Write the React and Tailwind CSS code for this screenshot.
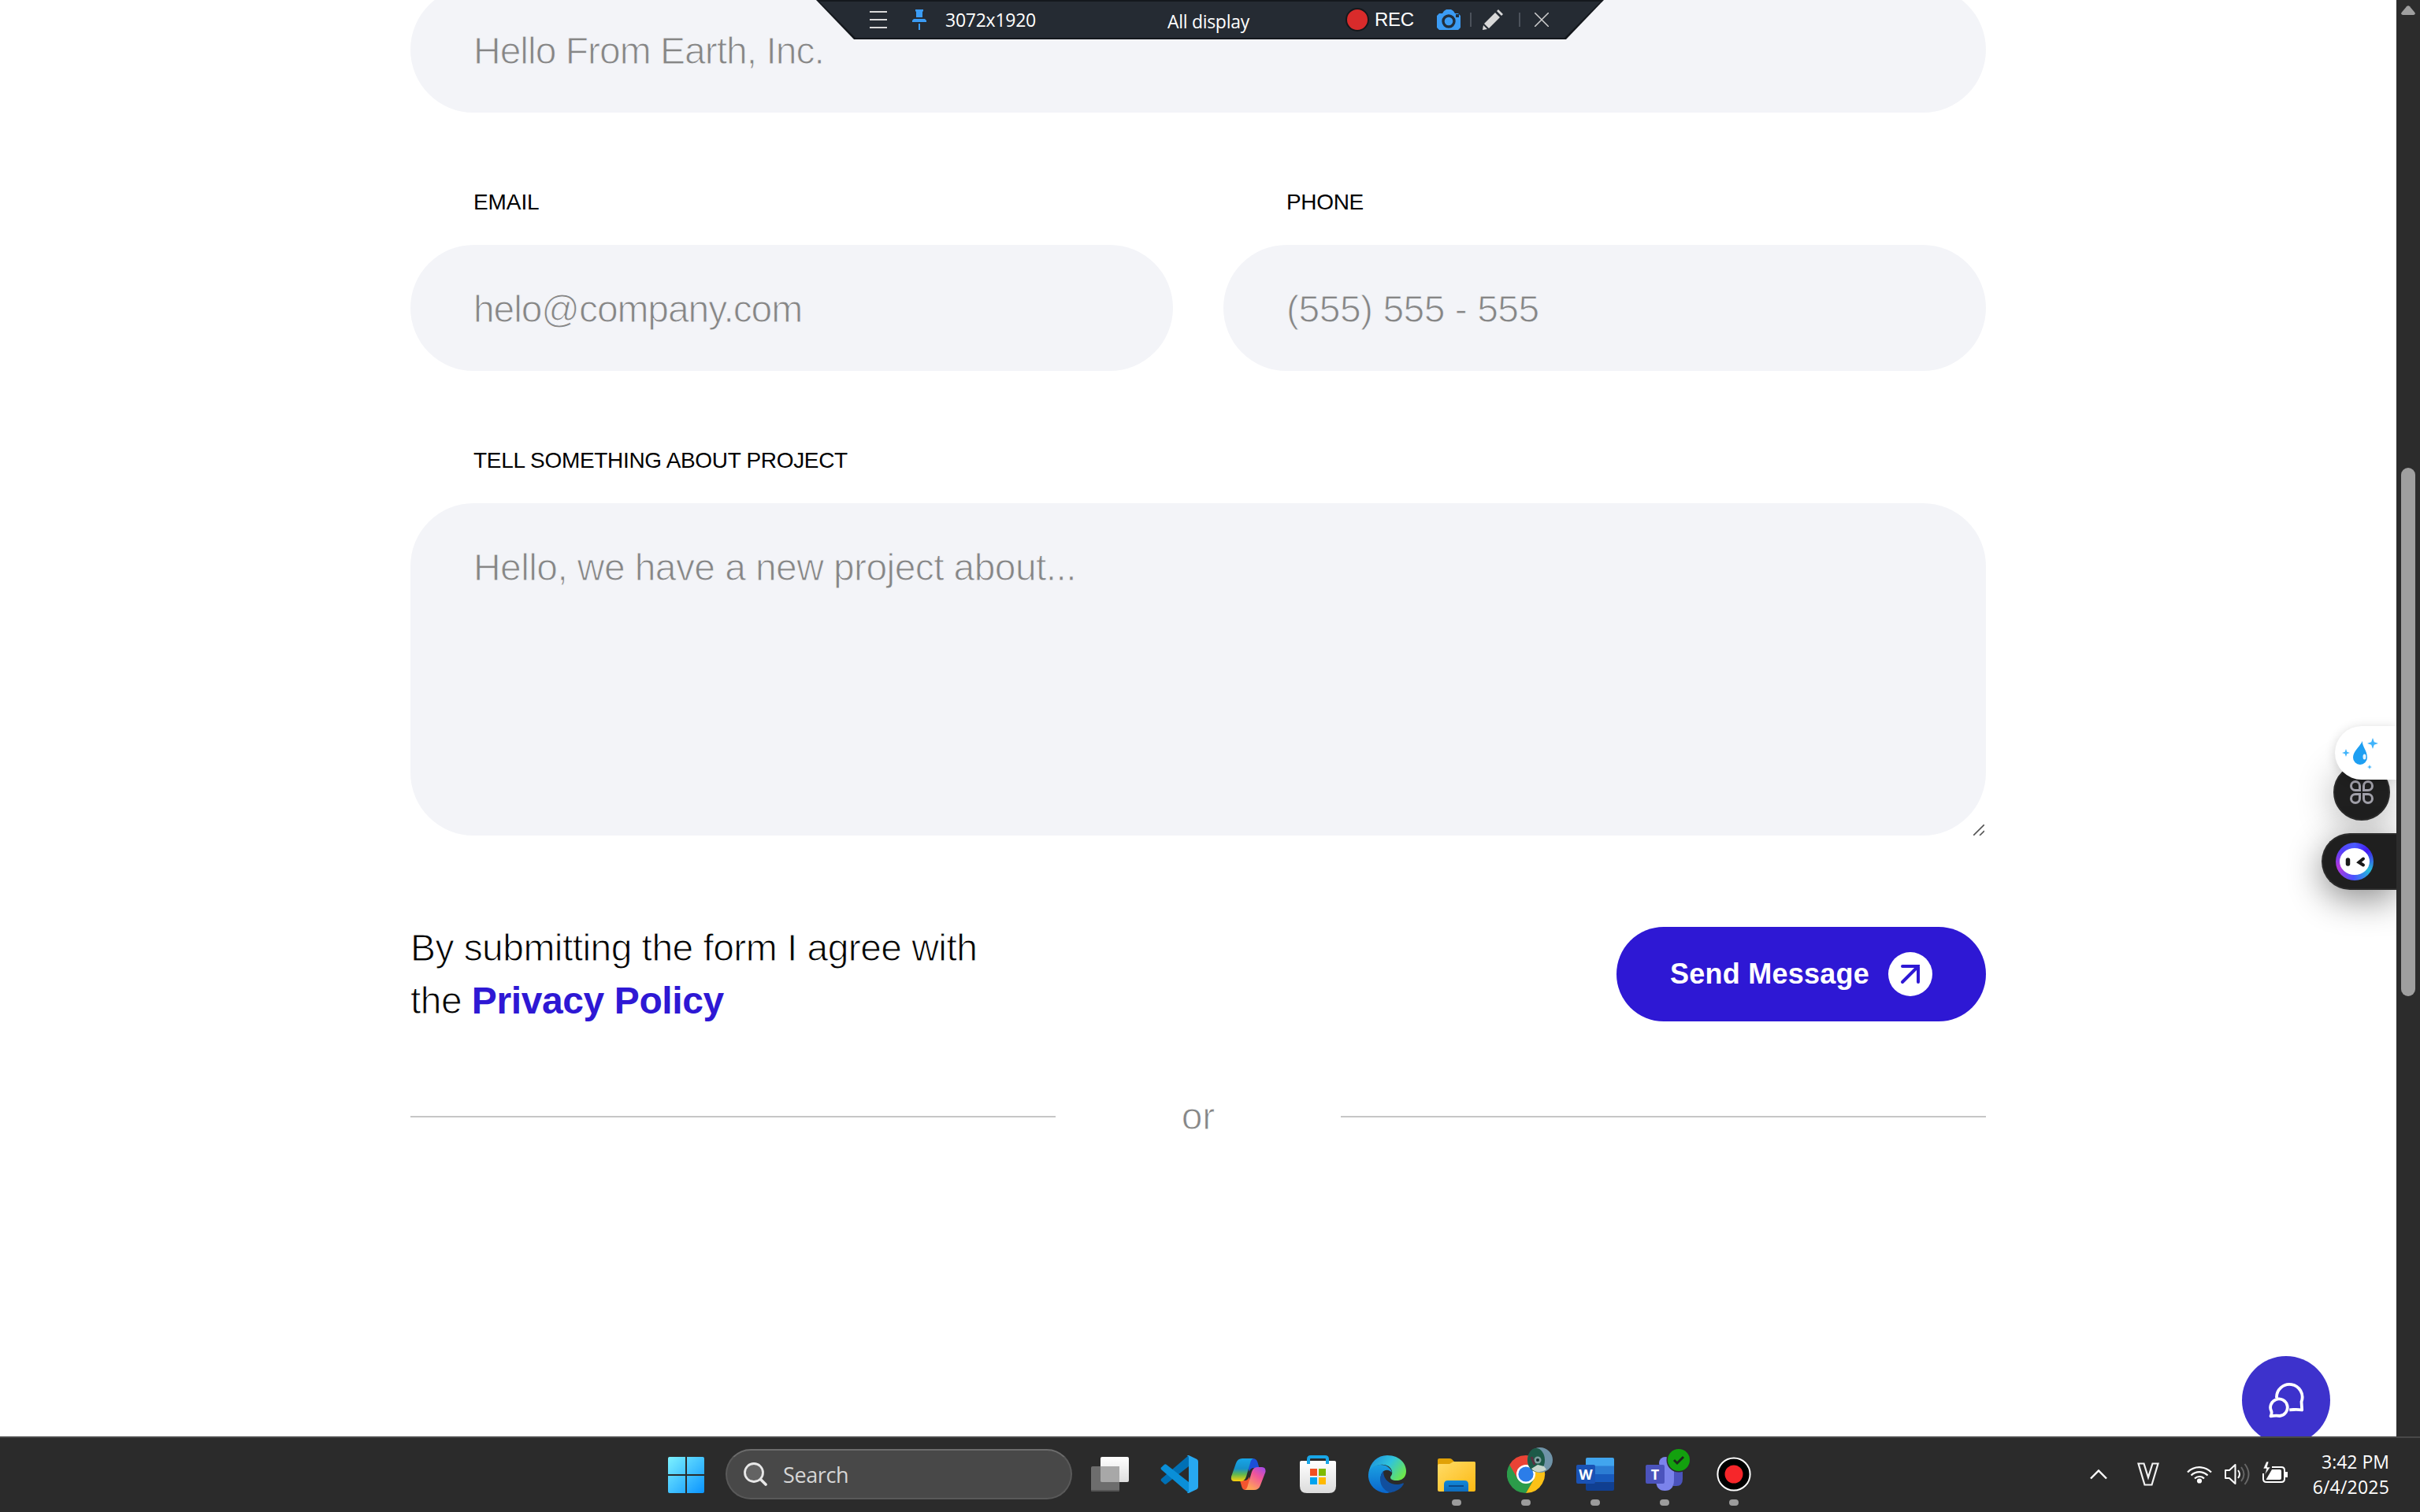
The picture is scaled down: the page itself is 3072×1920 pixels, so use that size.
const light = "font-['Liberation_Sans',Arial,sans-serif] text-[48px] whitespace-pre";
const fieldText = "text-[#868686] [-webkit-text-stroke:1px_#f3f4f8] leading-[68px]";
const label = "pl-20 font-['Liberation_Sans',Arial,sans-serif] text-[28px] leading-[34px] text-black whitespace-pre";

function CaptureBar() {
  return (
    <div className="absolute top-0 left-[1036px] z-20 h-[50px] w-[1000px] bg-[#14181d] [clip-path:polygon(0_0,100%_0,952px_100%,48px_100%)]">
      <div className="mx-auto h-12 w-[1000px] bg-[#252b33] pt-0.5 [clip-path:polygon(4px_2px,996px_2px,950px_100%,50px_100%)]">
        <div className="flex h-[46px] items-center pl-[68px] font-['Open_Sans',sans-serif] text-[23px] text-white">
          <svg className="h-[26px] w-[22px] shrink-0" viewBox="0 0 22 26" stroke="#d9d9d9" strokeWidth="2">
            <path d="M0 3h22M0 13h22M0 23h22" />
          </svg>
          <svg className="ml-8 h-[26px] w-[18px] shrink-0" viewBox="0 0 18 26" fill="#3b9cf5">
            <path d="M4 0h10v2l-1 1v7H5V3L4 2zM2 12h14l2 2v2H0v-2zM8 18h2v8H8z" />
          </svg>
          <span className="ml-[24px] w-[282px] leading-[46px] tracking-[-0.25px]">3072x1920</span>
          <span className="w-[226px] pt-1 leading-[42px] tracking-[-0.3px]">All display</span>
          <span className="size-[30px] shrink-0 rounded-full border-2 border-[#15181c] bg-[#d92b2b]" />
          <span className="ml-[7px] w-[50px] font-['Liberation_Sans',sans-serif] text-[24px] leading-[46px] tracking-[-0.3px]">REC</span>
          <svg className="ml-[29px] h-[26px] w-[30px] shrink-0" viewBox="0 0 30 26">
            <path fill="#3b9cf5" d="M9 2l3-2h6l3 2 2 3h4l3 3v15l-3 3H3l-3-3V8l3-3h4z" />
            <circle cx="15" cy="15" r="7" fill="none" stroke="#222f3d" strokeWidth="3.4" />
            <path d="M24 8h4" stroke="#222f3d" strokeWidth="4" />
          </svg>
          <span className="ml-[12px] h-[18px] w-0.5 bg-[#4c525b]" />
          <svg className="ml-[14px] size-[26px] shrink-0" viewBox="0 0 26 26" fill="#d9d9d9">
            <path d="M16 4l6 6L8 24l-6-6zM18 2l2-2 6 6-2 2zM1 20l5 5-6 1z" />
          </svg>
          <span className="ml-[20px] h-[18px] w-0.5 bg-[#4c525b]" />
          <svg className="ml-[18px] size-[18px] shrink-0" viewBox="0 0 18 18" stroke="#d0d0d0" strokeWidth="1.5">
            <path d="M0 0l18 18M18 0L0 18" />
          </svg>
        </div>
      </div>
    </div>
  );
}

function ContactForm() {
  return (
    <main className="mx-auto flex w-[2000px] flex-col">
      <div className="-mt-[17px] h-40 rounded-[80px] bg-[#f3f4f8] px-20 pt-[48px]">
        <div className={`${light} ${fieldText} tracking-[-1px]`}>Hello From Earth, Inc.</div>
      </div>
      <div className="mt-[97px] grid grid-cols-2 gap-x-16">
        <div>
          <div className={`${label} tracking-[-0.1px]`}>EMAIL</div>
          <div className="mt-[37px] h-40 rounded-[80px] bg-[#f3f4f8] px-20 pt-[48px]">
            <div className={`${light} ${fieldText} tracking-[-1.1px]`}>helo@company.com</div>
          </div>
        </div>
        <div>
          <div className={`${label} tracking-[-0.35px]`}>PHONE</div>
          <div className="mt-[37px] h-40 rounded-[80px] bg-[#f3f4f8] px-20 pt-[48px]">
            <div className={`${light} ${fieldText} tracking-[-0.5px]`}>(555) 555 - 555</div>
          </div>
        </div>
      </div>
      <div className={`${label} mt-[97px] tracking-[-0.32px]`}>TELL SOMETHING ABOUT PROJECT</div>
      <div className="relative mt-[37px] h-[422px] rounded-[80px] bg-[#f3f4f8] px-20 pt-[48px]">
        <div className={`${light} ${fieldText} tracking-[-0.6px]`}>Hello, we have a new project about...</div>
        <svg className="absolute right-0.5 bottom-0 size-[14px]" viewBox="0 0 14 14" stroke="#555" strokeWidth="1.6">
          <path d="M0 14L14 0M8 14L14 8" />
        </svg>
      </div>
      <div className="mt-[109px] flex h-[134px] items-start justify-between">
        <div className={`${light} leading-[67px] tracking-[-0.56px] text-black [-webkit-text-stroke:1px_#fff]`}>
          By submitting the form I agree with{"\n"}the{" "}
          <span className="font-bold tracking-[-0.4px] text-[#2e18d4] [-webkit-text-stroke:0px]">Privacy Policy</span>
        </div>
        <div className="mt-[7px] flex h-[120px] w-[469px] items-center justify-between rounded-full bg-[#2e18d4] px-[68px]">
          <span className="font-['Liberation_Sans',Arial,sans-serif] text-[36px] font-bold tracking-[0.25px] whitespace-pre text-white">Send Message</span>
          <span className="flex size-14 items-center justify-center rounded-full bg-white">
            <svg className="size-7" viewBox="0 0 28 28" fill="none" stroke="#2e18d4" strokeWidth="4" strokeLinecap="round">
              <path d="M4 4h20v20M24 4L4 24" />
            </svg>
          </span>
        </div>
      </div>
      <div className="mt-[80px] flex h-[68px] items-center justify-between">
        <span className="h-0.5 w-[819px] bg-[#c6c6c6]" />
        <span className={`${light} leading-[68px] text-[#868686] [-webkit-text-stroke:1px_#fff]`}>or</span>
        <span className="h-0.5 w-[819px] bg-[#c6c6c6]" />
      </div>
    </main>
  );
}

function SideWidgets() {
  return (
    <>
      <div className="absolute top-[970px] right-2 flex size-[72px] items-center justify-center rounded-full border-2 border-[#2b2b2b] bg-[#1f1f1f] shadow-[0_8px_48px_rgba(0,0,0,0.3)]">
        <svg className="size-[30px]" viewBox="0 0 30 30" fill="none" stroke="#a09fa8" strokeWidth="3">
          <path d="M12.5 12.5H7A5.5 5.5 0 1 1 12.5 7zM17.500 12.500V7A5.500 5.500 0 1 1 23 12.500zM12.500 17.500V23A5.500 5.500 0 1 1 7 17.500zM17.500 17.500H23A5.500 5.500 0 1 1 17.500 23z" />
        </svg>
      </div>
      <div className="absolute top-[1058px] right-0 flex h-[72px] w-[95px] items-center rounded-l-full border-2 border-r-0 border-[#2b2b2b] bg-[#1f1f1f] pl-4 shadow-[0_12px_44px_rgba(0,0,0,0.45)]">
        <span className="flex size-12 items-center justify-center rounded-full bg-[conic-gradient(from_0deg,#4a5cff,#4318f0_50deg,#24bcd8_120deg,#4a50ff_185deg,#b338dc_250deg,#5540fa_310deg,#4a5cff)]">
          <svg className="h-[34px] w-[38px]" viewBox="0 0 38 34">
            <ellipse cx="19" cy="17" rx="19" ry="17" fill="#fff" />
            <path d="M10.500 15v5" fill="none" stroke="#1a1a1a" strokeWidth="5.500" strokeLinecap="round" />
            <path d="M30 13.500l-5.500 4.500 5.500 3.500" fill="none" stroke="#1a1a1a" strokeWidth="4" strokeLinecap="round" />
          </svg>
        </span>
      </div>
      <div className="absolute top-[922px] right-0 h-[68px] w-[78px] rounded-l-full bg-white pt-[14px] pl-2 shadow-[0_2px_14px_rgba(0,0,0,0.16)]">
        <svg className="h-[42px] w-[48px]" viewBox="0 0 48 42">
          <path fill="#1e9ff2" d="M27 5c-1 6 6 12 6 21a9 9 0 0 1-18 0c0-8 8-13 12-21z" />
          <ellipse cx="29.500" cy="25" rx="2" ry="3.500" fill="#e5f4ff" />
          <path fill="#41b4fb" d="M40 1l1.800 5.200L47 8l-5.200 1.800L40 15l-1.800-5.200L33 8l5.200-1.800zM6 15l1.300 3.700L11 20l-3.700 1.300L6 25l-1.300-3.700L1 20l3.700-1.300zM36 35l.8 2.200L39 38l-2.200.8L36 41l-.8-2.200L33 38l2.200-.8z" />
        </svg>
      </div>
      <div className="absolute top-[1722px] right-[84px] size-28 rounded-full bg-[#3d32cc]">
        <svg className="mt-[33px] ml-[33px] size-[46px]" viewBox="0 0 46 46" fill="none" stroke="#fff" strokeWidth="3.8" strokeLinejoin="round">
          <path d="M11 20A16.300 16.300 0 1 1 42.500 25l.7 10.500q-6-1-11-.5l-5 .4" />
          <path d="M4.500 37.500A10.800 10.800 0 1 1 15 43q-5-.8-11.500.3 1.500-3 1-5.800z" fill="#3d32cc" />
        </svg>
      </div>
    </>
  );
}

function Scrollbar() {
  return (
    <div className="flex h-full w-[30px] shrink-0 flex-col items-center bg-[#2c2c2c] pt-[7px]">
      <svg className="h-3 w-[18px]" viewBox="0 0 18 12" fill="#9f9f9f">
        <path d="M7 1.200q2-2 4 0l6.500 7.800q1 2.500-1.500 3H2q-2.500-.5-1.500-3z" />
      </svg>
      <div className="mt-[575px] h-[671px] w-[18px] rounded-full bg-[#9f9f9f]" />
    </div>
  );
}

const icons = {
  taskview: (
    <svg className="size-12" viewBox="0 0 48 48">
      <defs>
        <linearGradient id="tv" x2="0" y2="1"><stop stopColor="#fff" /><stop offset="1" stopColor="#dedede" /></linearGradient>
      </defs>
      <rect x="12" y="2" width="36" height="32" rx="2" fill="url(#tv)" />
      <rect x="0" y="14" width="36" height="32" rx="2" fill="#7c7c7c" fillOpacity=".82" />
      <path d="M0 44h36v1q0 1-2 1H2q-2 0-2-1z" fill="#555" />
      <path d="M12 14h24v20H14q-2 0-2-2z" fill="#a8a8a8" />
    </svg>
  ),
  vscode: (
    <svg className="size-12" viewBox="0 0 48 48">
      <path d="M1 32.500l4 3.700q1.200 1 2.600 0L36 14V0L1 30q-1 1.200 0 2.500z" fill="#0070b5" />
      <path d="M1 15.500l4-3.700q1.200-1 2.600 0L36 34v14L1 18q-1-1.200 0-2.500z" fill="#0a8fd8" />
      <path d="M36 0l10 4.700q2 1 2 3.200v32.200q0 2.200-2 3.200L36 48q-1.500.5-2.300-1 2.300 1 2.300-2V3q0-3-2.300-2Q34.500-.5 36 0z" fill="#27a8f0" />
    </svg>
  ),
  copilot: (
    <svg className="size-12" viewBox="0 0 48 48">
      <defs>
        <linearGradient id="cpa" x2="0" y2="1"><stop stopColor="#17a5e8" /><stop offset=".45" stopColor="#1690c8" /><stop offset=".7" stopColor="#62b84e" /><stop offset="1" stopColor="#ffd10a" /></linearGradient>
        <linearGradient id="cpb" x1="1" x2=".4" y2="1"><stop stopColor="#9a48f0" /><stop offset=".45" stopColor="#f0559a" /><stop offset="1" stopColor="#ffa358" /></linearGradient>
      </defs>
      <path d="M22 4h7q5 0 6.500 5l2 7h-7q-4 0-6 5z" fill="#1b4fd8" />
      <path d="M26 44h-6q-4 0-5-5l-2-7h6q4 0 6-5z" fill="#f4552f" />
      <path d="M16 4h14q-3 1-4 6l-5 17q-2 6-7 6H6q-5 0-4-6L8 10q2-6 8-6z" fill="url(#cpa)" />
      <path d="M31 44H19q3-1 4-6l5-17q2-6 7-6h6q5 0 4.500 6L39 38q-2 6-8 6z" fill="url(#cpb)" />
    </svg>
  ),
  store: (
    <svg className="size-12" viewBox="0 0 48 48">
      <defs>
        <linearGradient id="st" x2="0" y2="1"><stop stopColor="#fff" /><stop offset="1" stopColor="#dcdcdc" /></linearGradient>
      </defs>
      <path d="M1 9q0-2 2-2h42q2 0 2 2v30q0 9-9 9H10q-9 0-9-9z" fill="url(#st)" />
      <path d="M12 11V5q0-3 3-3h18q3 0 3 3v6" fill="none" stroke="#18a6e8" strokeWidth="4" />
      <path d="M14 17h9v9h-9z" fill="#f25022" /><path d="M25 17h9v9h-9z" fill="#7fba00" />
      <path d="M14 28h9v9h-9z" fill="#00a4ef" /><path d="M25 28h9v9h-9z" fill="#ffb900" />
    </svg>
  ),
  edge: (
    <svg className="size-12" viewBox="0 0 48 48">
      <defs>
        <linearGradient id="ea" x1="0" y1=".2" x2="1" y2=".7"><stop stopColor="#1c8fdc" /><stop offset=".5" stopColor="#30c4dc" /><stop offset="1" stopColor="#6fe848" /></linearGradient>
        <linearGradient id="eb" x2="0" y2="1"><stop stopColor="#1aa0e2" /><stop offset="1" stopColor="#0a66cc" /></linearGradient>
      </defs>
      <path d="M0 24C2 8 12 0 24 0c15 0 24 10 24 20 0 8-5 12-12 12-6 0-8-2-8-4s3-3 2-8C28 12 18 10 11 13 5 15 1 19 0 24z" fill="url(#ea)" />
      <path d="M0 24c1-8 8-12 15-12 9 0 14 5 15 10-3-4-10-5-13 1-5 10 3 20 11 24-3 1-5 1-6 1C8 47-1 36 0 24z" fill="url(#eb)" />
      <path d="M19 20c-8 10-3 24 9 27.500C36 46 42 42 44.500 37c1-1 0-2-1-1.500C34 40 19 35 19 20z" fill="#114f9e" />
    </svg>
  ),
  folder: (
    <svg className="size-12" viewBox="0 0 48 48">
      <defs>
        <linearGradient id="fo" x2="1" y2="1"><stop stopColor="#ffdc68" /><stop offset="1" stopColor="#fdb912" /></linearGradient>
        <linearGradient id="fb" x2="0" y2="1"><stop stopColor="#1288d8" /><stop offset="1" stopColor="#0f6cbd" /></linearGradient>
      </defs>
      <path d="M0 6q0-2 2-2h13q2 0 3 1l3 3h25q2 0 2 2v8H0z" fill="#e0a106" />
      <path d="M0 13q0-2 2-2h13l5-3h26q2 0 2 2v34q0 2-2 2H2q-2 0-2-2z" fill="url(#fo)" />
      <path d="M8 46V37q0-5 5-5h21q5 0 5 5v9z" fill="url(#fb)" /><path d="M14 39h19" stroke="#0a4a8a" strokeWidth="2" />
    </svg>
  ),
  chrome: (
    <svg className="h-[62px] w-[60px] -translate-y-[3px] translate-x-[6px]" viewBox="0 -10 60 62">
      <path d="M3.200 12A24 24 0 0 1 44.800 12L24 12.600z" fill="#ea4335" />
      <path d="M3.200 12A24 24 0 0 0 24 48L34.400 30 24 24z" fill="#2b9c4a" />
      <path d="M44.800 12A24 24 0 0 1 24 48l10.400-18L24 12z" fill="#fbc116" />
      <path d="M3.200 12L13.600 30 24 12z" fill="#ea4335" />
      <circle cx="24" cy="24" r="12" fill="#fff" /><circle cx="24" cy="24" r="9.600" fill="#2b7de9" />
      <ellipse cx="42" cy="6" rx="16" ry="16" fill="#6f93a8" />
      <ellipse cx="37" cy="6" rx="11" ry="15" fill="#1d5a48" />
      <path d="M31 17l8-5 8 2 3 4q-9 6-17 1z" fill="#c8d6cc" />
      <circle cx="39" cy="6" r="4.500" fill="#7fa0a0" /><circle cx="39" cy="6" r="2" fill="#102c2c" />
      <path d="M31 2l4 10" stroke="#5b3040" strokeWidth="3" />
    </svg>
  ),
  word: (
    <svg className="size-12" viewBox="0 0 48 48">
      <path d="M12 5q0-2 2-2h32q2 0 2 2v9H12z" fill="#41a5ee" /><path d="M12 13.500h36V24H12z" fill="#2b7cd3" />
      <path d="M12 24h36v10.500H12z" fill="#185abd" /><path d="M12 34.500h36V43q0 2-2 2H14q-2 0-2-2z" fill="#103f91" />
      <rect x="0" y="12" width="24" height="24" rx="2" fill="#1a52b4" />
      <text x="12" y="30.500" textAnchor="middle" fontSize="18" fontWeight="700" fill="#fff" className="font-['Open_Sans',sans-serif]">W</text>
    </svg>
  ),
  teams: (
    <svg className="h-[60px] w-[58px] -translate-y-[6px] translate-x-[5px]" viewBox="0 -12 58 60">
      <path d="M35 16h12v14q0 9-8 9h-4z" fill="#4b53bc" />
      <circle cx="25" cy="10" r="8" fill="#7b83eb" />
      <path d="M13 16h23v15q0 14-11.500 14T13 31z" fill="#7b83eb" />
      <rect x="0" y="12" width="24" height="24" rx="2" fill="#4b53bc" />
      <text x="12" y="30.500" textAnchor="middle" fontSize="18" fontWeight="700" fill="#fff" className="font-['Open_Sans',sans-serif]">T</text>
      <circle cx="42" cy="6" r="15.500" fill="#2b2b2b" /><circle cx="42" cy="6" r="14" fill="#13a10e" />
      <path d="M36 6l4 4 8-8" fill="none" stroke="#1c2a1c" strokeWidth="3" />
    </svg>
  ),
  recorder: (
    <svg className="size-12" viewBox="0 0 48 48">
      <circle cx="24" cy="24" r="20.600" fill="#000" stroke="#fff" strokeWidth="2" /><circle cx="24" cy="24" r="11.500" fill="#f6262a" />
    </svg>
  ),
};

const apps = [
  ["taskview", false], ["vscode", false], ["copilot", false], ["store", false], ["edge", false],
  ["folder", true], ["chrome", true], ["word", true], ["teams", true], ["recorder", true],
];

function Taskbar() {
  return (
    <footer className="flex h-24 w-full shrink-0 border-t-2 border-[#484848] bg-[#2b2b2b] font-['Open_Sans',sans-serif]">
      <div className="flex w-[2600px] pl-[848px]">
        <svg className="mt-6 size-[46px]" viewBox="0 0 46 46">
          <defs>
            <linearGradient id="win" x2="46" y2="46" gradientUnits="userSpaceOnUse"><stop stopColor="#7df2ff" /><stop offset="1" stopColor="#0a94ff" /></linearGradient>
          </defs>
          <path fill="url(#win)" d="M2 0h20v22H0V2q0-2 2-2zM24 0h20q2 0 2 2v20H24zM0 24h22v22H2q-2 0-2-2zM24 24h22v20q0 2-2 2H24z" />
        </svg>
        <div className="mt-[14px] ml-[27px] flex h-16 w-[440px] items-center rounded-full border-2 border-[#595959] border-t-[#6c6c6c] bg-[#484848] pl-[21px]">
          <svg className="size-[30px]" viewBox="0 0 30 30" fill="none" stroke="#e8e8e8" strokeLinecap="round">
            <circle cx="13" cy="13" r="11.500" strokeWidth="2.800" fill="#636363" /><path d="M21.500 21.500L28 28" strokeWidth="3.600" />
          </svg>
          <span className="ml-[20px] pt-0.5 text-[27px] leading-[60px] tracking-[-0.4px] text-[#d6d6d6]">Search</span>
        </div>
        <div className="ml-1 flex">
          {apps.map(([name, open]) => (
            <div key={name} className="flex w-[88px] flex-col items-center pt-[22px]">
              <div className="flex size-12 items-center justify-center overflow-visible *:shrink-0">{icons[name]}</div>
              {open && <span className="mt-2 h-2 w-3 rounded-full bg-[#9c9c9c]" />}
            </div>
          ))}
        </div>
      </div>
      <div className="flex grow pl-[53px]">
        <svg className="mt-[39px] h-[14px] w-[22px]" viewBox="0 0 22 14" fill="none" stroke="#fff" strokeWidth="2.400"><path d="M1 12.500l10-10 10 10" /></svg>
        <svg className="mt-[31px] ml-[38px] h-[30px] w-[28px]" viewBox="0 0 28 30" fill="none" stroke="#f2f2f2" strokeWidth="2.200">
          <path d="M1.500 1.500H8.500L14 19l5.500-17.500h7L18.500 28.500h-9z" />
        </svg>
        <svg className="mt-[34px] ml-[35px] h-[24px] w-[32px]" viewBox="0 0 32 24" fill="none" stroke="#fff" strokeWidth="2.200">
          <path d="M1 9.500a21 21 0 0 1 30 0M5.500 13.500a15 15 0 0 1 21 0M10 17.500a8.500 8.500 0 0 1 12 0" /><circle cx="16" cy="20.500" r="2" fill="#fff" />
        </svg>
        <svg className="mt-[32px] ml-4 h-[28px] w-[33px]" viewBox="0 0 33 28" fill="none" stroke="#fff" strokeWidth="2">
          <path d="M1 9h5l7.500-7v24L6 19H1z" strokeLinejoin="round" /><path d="M17 9q4 5 0 10" />
          <path d="M21 5q7 9 0 18M25.500 1q10 13 0 26" stroke="#666" />
        </svg>
        <svg className="mt-[30px] ml-[15px] h-[27px] w-[32px]" viewBox="0 0 32 27" fill="none" stroke="#fff" strokeWidth="2">
          <path d="M12 7h12q4 0 4 4v11q0 4-4 4H5q-4 0-4-4v-7" /><path d="M29 14h3v5h-3z" fill="#fff" />
          <path d="M12 10h10q2 0 2 2v9q0 2-2 2H4.500z" fill="#fff" stroke="none" /><path d="M5 0L1 9h4l-2 8 7-10H6l2-7z" fill="#fff" stroke="#2b2b2b" strokeWidth=".6" />
        </svg>
        <div className="ml-auto flex flex-col items-end pt-[14px] pr-[39px] text-[23px] leading-8 text-white">
          <span className="tracking-[0px]">3:42 PM</span>
          <span className="tracking-[0.2px]">6/4/2025</span>
        </div>
      </div>
    </footer>
  );
}

export default function App() {
  return (
    <div className="relative flex h-[1920px] w-[3072px] flex-col overflow-hidden bg-white">
      <CaptureBar />
      <div className="flex h-[1824px] w-full">
        <div className="relative h-full w-[3042px] shrink-0 overflow-hidden">
          <div className="flow-root"><ContactForm /></div>
          <SideWidgets />
        </div>
        <Scrollbar />
      </div>
      <Taskbar />
    </div>
  );
}
